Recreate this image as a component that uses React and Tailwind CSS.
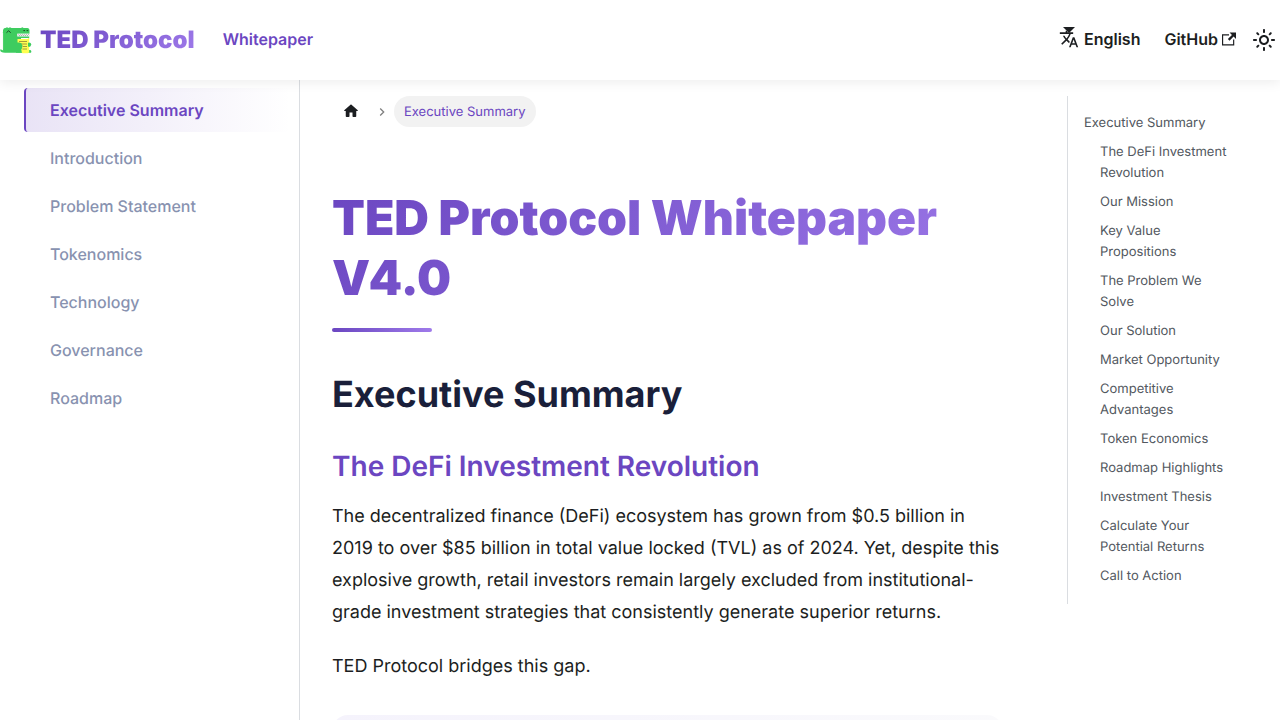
const NAV = ['Executive Summary', 'Introduction', 'Problem Statement', 'Tokenomics', 'Technology', 'Governance', 'Roadmap'];

const TOC = [
  'The DeFi Investment Revolution',
  'Our Mission',
  'Key Value Propositions',
  'The Problem We Solve',
  'Our Solution',
  'Market Opportunity',
  'Competitive Advantages',
  'Token Economics',
  'Roadmap Highlights',
  'Investment Thesis',
  'Calculate Your Potential Returns',
  'Call to Action',
];

function Logo() {
  return (
    <svg viewBox="0 0 32 32" className="size-8" aria-hidden="true">
      <path
        fill="#3ecc5f"
        d="M3 7.500V6l1-1.800 1.500-.2L7 3.200l1.500.8L10 3.200l1.500.8H21l1.300-.7 1.300.7h3.700c1.500 0 2.200 1 2.200 2.500v3.300H17.500v2.400h11.700v1.800H21v12h9c1.200 0 1.800 1.500 1 2.800H5C2 28.800.3 28 .1 25.800L1 25.200c.7.900 1.500 1.200 2.300 1l-.5-1.200.5-1-.5-1 .5-1-.5-1 .5-1-.5-1 .5-1-.5-1 .5-1-.5-1 .5-1-.5-1 .5-1-.5-1 .5-1-.5-1z"
      />
      <path fill="#fff" d="M17 9.800h12.300v2.500H17z" />
      <path fill="none" stroke="#33443a" strokeWidth=".7" d="M17.300 11.300l1-.8 1 1.200 1-1.200 1 1.200 1-1.200 1 1.200 1-1.200 1 1.200 1-1.200 1 1.200 1-1.200 1 .8" opacity=".6" />
      <path fill="#ffff50" d="M17.500 15h10l1.700-1.300V27.500c0 1-.7 1.700-1.600 1.700H22.500l-1.500-1.500h-3.500z" />
      <path stroke="#8d8236" strokeWidth=".8" d="M19 17.500h8M19 20h8M22.500 22.500H27M22.500 25H27" />
      <path fill="#3ecc5f" d="M16 18.500h3.500l2.300 1-.1 1 .9 1-.6 1.200.3 1.200-1 1.300.5 3.500H16z" />
      <path fill="#3ecc5f" d="M29 18.500l1.700.6.500 1.500-.6 1.700-1.600.8-1-.8V19z" />
      <path fill="none" stroke="#173b20" strokeWidth=".9" strokeLinecap="round" d="M6.800 8.400l1.800-1.600 1.800 1.600M23.800 6.600h.8M27 6.600h.8" />
    </svg>
  );
}

function LanguageIcon() {
  return (
    <svg viewBox="0 0 24 24" className="size-5" fill="currentColor" aria-hidden="true">
      <path d="M12.870 15.070l-2.540-2.510.030-.030c1.740-1.940 2.980-4.170 3.710-6.530H17V4h-7V2H8v2H1v1.990h11.170C11.500 7.920 10.440 9.750 9 11.350 8.070 10.320 7.300 9.190 6.690 8h-2c.730 1.630 1.730 3.170 2.980 4.560l-5.090 5.020L4 19l5-5 3.110 3.110.760-2.040zM18.500 10h-2L12 22h2l1.120-3h4.750L21 22h2l-4.500-12zm-2.620 7l1.620-4.330L19.120 17h-3.240z" />
    </svg>
  );
}

function ExternalIcon() {
  return (
    <svg viewBox="0 0 24 24" className="size-3.5" fill="currentColor" aria-hidden="true">
      <path d="M21 13v10h-21v-19h12v2h-10v15h17v-8h2zm3-12h-10.988l4.035 4-6.977 7.070 2.828 2.828 6.977-7.070 4.125 4.172v-11z" />
    </svg>
  );
}

function SunIcon() {
  return (
    <svg viewBox="0 0 24 24" className="size-6" fill="currentColor" aria-hidden="true">
      <path d="M12,9c1.65,0,3,1.35,3,3s-1.35,3-3,3s-3-1.35-3-3S10.35,9,12,9 M12,7c-2.76,0-5,2.24-5,5s2.24,5,5,5s5-2.24,5-5 S14.76,7,12,7L12,7z M2,13l2,0c0.55,0,1-0.45,1-1s-0.45-1-1-1l-2,0c-0.55,0-1,0.45-1,1S1.45,13,2,13z M20,13l2,0c0.55,0,1-0.45,1-1 s-0.45-1-1-1l-2,0c-0.55,0-1,0.45-1,1S19.45,13,20,13z M11,2v2c0,0.55,0.45,1,1,1s1-0.45,1-1V2c0-0.55-0.45-1-1-1S11,1.45,11,2z M11,20v2c0,0.55,0.45,1,1,1s1-0.45,1-1v-2c0-0.55-0.45-1-1-1C11.45,19,11,19.45,11,20z M5.99,4.58c-0.39-0.39-1.03-0.39-1.41,0 c-0.39,0.39-0.39,1.03,0,1.41l1.06,1.06c0.39,0.39,1.03,0.39,1.41,0s0.39-1.03,0-1.41L5.99,4.58z M18.36,16.95 c-0.39-0.39-1.03-0.39-1.41,0c-0.39,0.39-0.39,1.03,0,1.41l1.06,1.06c0.39,0.39,1.03,0.39,1.41,0c0.39-0.39,0.39-1.03,0-1.41 L18.36,16.95z M19.42,5.99c0.39-0.39,0.39-1.03,0-1.41c-0.39-0.39-1.03-0.39-1.41,0l-1.06,1.06c-0.39,0.39-0.39,1.03,0,1.41 s1.03,0.39,1.41,0L19.42,5.99z M7.05,18.36c0.39-0.39,0.39-1.03,0-1.41c-0.39-0.39-1.03-0.39-1.41,0l-1.06,1.06 c-0.39,0.39-0.39,1.03,0,1.41s1.03,0.39,1.41,0L7.05,18.36z" />
    </svg>
  );
}

function Header() {
  return (
    <header className="relative z-10 flex h-20 items-center justify-between bg-white font-semibold shadow-[0_2px_12px_rgba(0,0,0,0.08)]">
      <div className="flex items-center">
        <a href="#home" className="flex items-center gap-2">
          <Logo />
          <span className="bg-linear-135 from-[#6b46c1] to-[#9f7aea] bg-clip-text text-2xl font-black text-transparent">
            TED Protocol
          </span>
        </a>
        <a href="#whitepaper" className="ml-7 pb-0.5 text-[#6b46c1]">Whitepaper</a>
      </div>
      <div className="flex items-center">
        <button type="button" className="relative flex items-center gap-[5px] pb-0.5">
          <LanguageIcon />
          English
          <svg viewBox="0 0 12 6" className="absolute top-0 left-1 h-1.5 w-3" fill="currentColor" aria-hidden="true">
            <path d="M0 0h12L6 6z" />
          </svg>
        </button>
        <a href="#github" className="ml-6 flex items-center gap-1 pb-0.5">
          GitHub
          <ExternalIcon />
        </a>
        <button type="button" aria-label="Switch colour mode" className="ml-3 flex size-8 items-center justify-center">
          <SunIcon />
        </button>
      </div>
    </header>
  );
}

function Sidebar() {
  return (
    <aside className="w-[300px] shrink-0 border-r border-[#dadde1] py-2 pr-2 pl-6">
      <nav aria-label="Docs sidebar">
        <ul className="flex flex-col gap-1">
          {NAV.map((name, i) => (
            <li key={name}>
              <a
                href={'#' + name}
                aria-current={i === 0 ? 'page' : undefined}
                className={
                  'flex h-11 items-center rounded border-l-2 px-6 ' +
                  (i === 0
                    ? 'border-[#6b46c1] bg-linear-to-r from-[#6b46c1]/15 to-transparent font-semibold text-[#6b46c1]'
                    : 'border-transparent font-medium text-[#8892b0]')
                }
              >
                {name}
              </a>
            </li>
          ))}
        </ul>
      </nav>
    </aside>
  );
}

function Breadcrumbs() {
  return (
    <nav aria-label="Breadcrumbs" className="flex h-[31px] items-center text-[13px]">
      <a href="#home" aria-label="Home page" className="px-2.5 pb-0.5">
        <svg viewBox="0 0 24 24" className="size-[18px]" fill="currentColor" aria-hidden="true">
          <path d="M10 19v-5h4v5c0 .55.45 1 1 1h3c.55 0 1-.45 1-1v-7h1.700c.46 0 .68-.57.33-.87L12.670 3.600c-.38-.34-.96-.34-1.340 0l-8.360 7.530c-.34.3-.13.87.33.87H5v7c0 .55.45 1 1 1h3c.55 0 1-.45 1-1z" />
        </svg>
      </a>
      <svg viewBox="0 0 8 8" className="mx-2 size-2" fill="none" stroke="#7f7f7f" strokeWidth="1.300" aria-hidden="true">
        <path d="M2.200.5L5.700 4 2.200 7.500" />
      </svg>
      <span className="rounded-full bg-[#f2f2f2] px-2.5 pt-1.5 pb-1 leading-[21px] text-[#6b46c1]">Executive Summary</span>
    </nav>
  );
}

export default function App() {
  return (
    <div className="flex h-screen flex-col overflow-hidden bg-white font-[Inter,sans-serif] text-base text-[#1c1e21] antialiased [text-rendering:geometricPrecision]">
      <Header />
      <div className="flex min-h-0 flex-1">
        <Sidebar />
        <div className="flex min-w-0 flex-1 pt-4">
          <main className="w-3/4 px-8">
            <Breadcrumbs />
            <article className="pt-[61px]">
              <h1 className="bg-linear-135 from-[#6b46c1] to-[#9f7aea] bg-clip-text text-5xl leading-[60px] font-black text-transparent">
                TED Protocol Whitepaper V4.0
              </h1>
              <div className="mt-5 h-1 w-25 rounded-sm bg-linear-to-r from-[#6b46c1] to-[#9f7aea]" />
              <h2 className="mt-10 text-4xl leading-11 font-bold text-[#1a1f3a]">Executive Summary</h2>
              <h3 className="mt-8 text-[28px] leading-9 font-semibold text-[#6b46c1]">The DeFi Investment Revolution</h3>
              <p className="mt-[17px] text-lg leading-8">
                The decentralized finance (DeFi) ecosystem has grown from $0.5 billion in 2019 to over $85 billion in
                total value locked (TVL) as of 2024. Yet, despite this explosive growth, retail investors remain largely
                excluded from institutional-grade investment strategies that consistently generate superior returns.
              </p>
              <p className="mt-5.5 text-lg leading-8">TED Protocol bridges this gap.</p>
              <div className="mt-8 h-40 rounded-2xl bg-linear-to-r from-[#f5f3fc] to-[#fafafc]" />
            </article>
          </main>
          <aside className="w-1/4 px-8">
            <nav aria-label="On this page" className="border-l border-[#dadde1] px-4 py-[17px] text-[13px] leading-[21px] text-[#525860]">
              <a href="#executive-summary">Executive Summary</a>
              <ul className="mt-2 flex flex-col gap-2 pl-4">
                {TOC.map((name) => (
                  <li key={name}>
                    <a href={'#' + name}>{name}</a>
                  </li>
                ))}
              </ul>
            </nav>
          </aside>
        </div>
      </div>
    </div>
  );
}
